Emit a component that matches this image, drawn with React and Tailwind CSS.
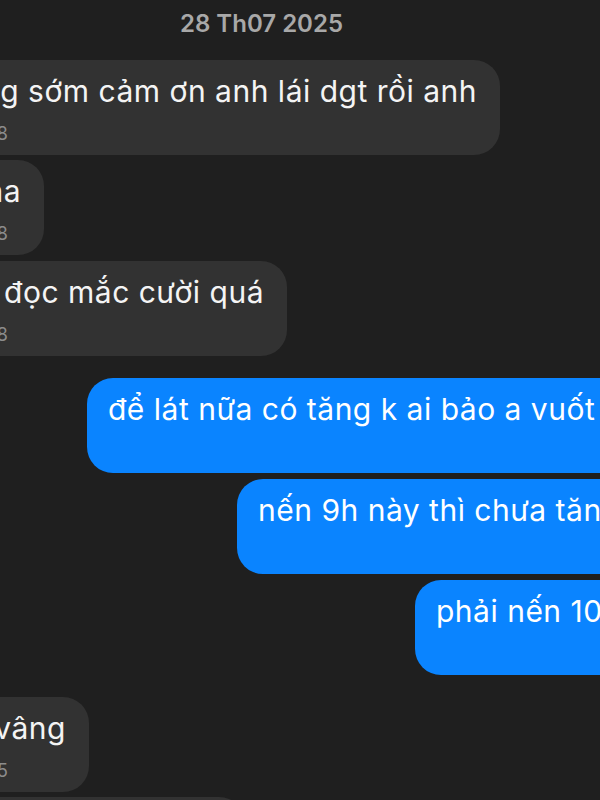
const FONT = { fontFamily: 'Inter, "Liberation Sans", sans-serif' }

// incoming bubble: left side runs off screen, so text is pushed to the right and overflows left
function Incoming({ text, time, right, className = '' }) {
  return (
    <div
      className={`h-[95px] shrink-0 rounded-r-[26px] bg-[#323232] pt-[13px] ${className}`}
      style={{ width: right }}
    >
      <div className="flex h-[36px] justify-end whitespace-nowrap pr-[23px] text-[30px] leading-[36px] tracking-[0.5px] text-[#f4f4f4]">
        <span>{text}</span>
      </div>
      <div className="mt-[15px] flex w-[8px] justify-end whitespace-nowrap text-[18px] leading-[20px] text-[#8c8c8c]">
        <span>{time}</span>
      </div>
    </div>
  )
}

// outgoing bubble: right side runs off screen
function Outgoing({ text, left, className = '' }) {
  return (
    <div className={`flex shrink-0 ${className}`} style={{ paddingLeft: left }}>
      <div className="h-[95px] w-[700px] shrink-0 rounded-l-[26px] bg-[#0a84ff] pl-[21px] pt-[13px]">
        <div className="whitespace-nowrap text-[30px] leading-[36px] tracking-[0.5px] text-white">{text}</div>
      </div>
    </div>
  )
}

export default function App() {
  return (
    <div className="flex h-[800px] w-[600px] flex-col overflow-hidden bg-[#1f1f1f]" style={FONT}>
      <div className="flex h-[44px] shrink-0 items-center pl-[180px] pt-[3px] text-[24px] font-semibold text-[#a8a8a8]">
        28 Th07 2025
      </div>

      <Incoming className="mt-[16px]" right={500} text="xong sớm cảm ơn anh lái dgt rồi anh" time="08:28" />
      <Incoming className="mt-[5px]" right={44} text="haha" time="08:28" />
      <Incoming className="mt-[6px]" right={287} text="em đọc mắc cười quá" time="08:28" />

      <Outgoing className="mt-[22px]" left={87} text="để lát nữa có tăng k ai bảo a vuốt" />
      <Outgoing className="mt-[6px]" left={237} text="nến 9h này thì chưa tăng" />
      <Outgoing className="mt-[6px]" left={415} text="phải nến 10h" />

      <Incoming className="mt-[22px]" right={89} text="vâng" time="08:35" />
      <div className="mt-[5px] h-[95px] w-[245px] shrink-0 rounded-r-[26px] bg-[#323232]" />
    </div>
  )
}
